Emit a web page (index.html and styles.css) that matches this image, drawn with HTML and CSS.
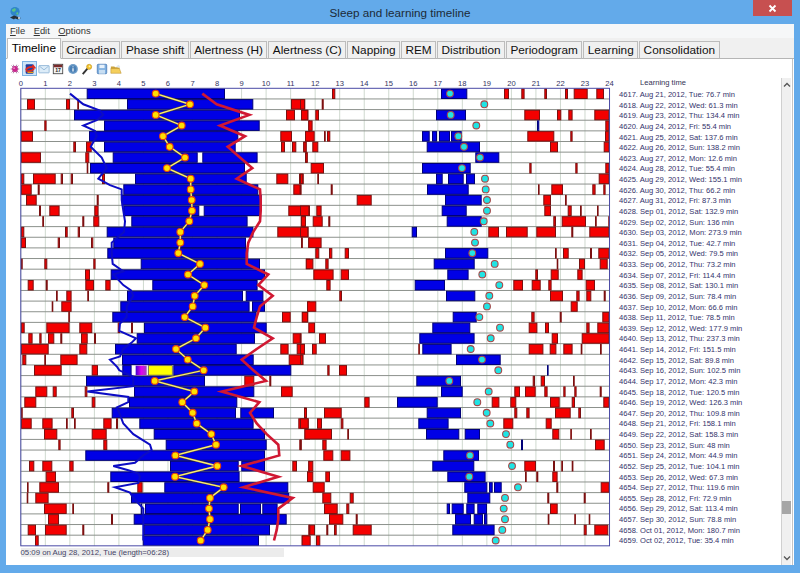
FILE: index.html
```html
<!DOCTYPE html>
<html lang="en">
<head>
<meta charset="utf-8">
<title>Sleep and learning timeline</title>
<link rel="stylesheet" href="styles.css">
</head>
<body>
<div class="window">
  <header class="titlebar">
    <svg class="app-icon" viewBox="0 0 14 14"><circle cx="7" cy="5.5" r="4.6" fill="#2f86c9"/><path d="M4 3.5l3-1.5 1 2-2 2-2-1zM8 7l2-1 .5 2-1.5 1z" fill="#58c08a"/><path d="M2 11.5l4-2 3 1 4 1.5-3 1.5-3-1-1 1z" fill="#27303a"/><circle cx="11" cy="12" r="1" fill="#e8e8e8"/></svg>
    <h1 class="title">Sleep and learning timeline</h1>
    <button class="close" aria-label="Close"><svg viewBox="0 0 9 9"><path d="M1.5 1.5l6 6M7.5 1.5l-6 6" stroke="#fff" stroke-width="1.8"/></svg></button>
  </header>
  <div class="client">
    <nav class="menu">
      <span><u>F</u>ile</span><span><u>E</u>dit</span><span><u>O</u>ptions</span>
    </nav>
    <div class="tabs">
      <div class="tab active">Timeline</div>
      <div class="tab">Circadian</div>
      <div class="tab">Phase shift</div>
      <div class="tab">Alertness (H)</div>
      <div class="tab">Alertness (C)</div>
      <div class="tab">Napping</div>
      <div class="tab">REM</div>
      <div class="tab">Distribution</div>
      <div class="tab">Periodogram</div>
      <div class="tab">Learning</div>
      <div class="tab">Consolidation</div>
    </div>
    <div class="panel">
      <div class="main">
        <div class="toolbar">
          <span class="tool"><svg viewBox="0 0 14 14"><g stroke="#8a3a7a" stroke-width=".8"><path d="M3 3l8 8M11 3L3 11M2 7h10M5 2l4 10M9 2L5 12"/></g><circle cx="7" cy="7" r="3.4" fill="#c8288e"/><circle cx="6" cy="6" r="1.1" fill="#ea8ac8"/></svg></span>
          <span class="tool on"><svg viewBox="0 0 14 14"><rect x="2" y="1.5" width="9" height="11" rx="1" fill="#1f3f9f"/><path d="M2 8c3-4 6-4 10-3l-2-2.500M12 6c-3 4-6 4-10 3" fill="none" stroke="#e02a20" stroke-width="2"/><path d="M4 11h7" stroke="#e8a020" stroke-width="1.500"/></svg></span>
          <span class="tool"><svg viewBox="0 0 14 14"><rect x="1" y="3" width="12" height="8.500" rx=".5" fill="#dcecf8" stroke="#8fb4d6"/><path d="M1.500 3.500L7 8l5.500-4.500" fill="none" stroke="#8fb4d6"/></svg></span>
          <span class="tool"><svg viewBox="0 0 14 14"><rect x="1.500" y="1.500" width="11" height="11" fill="#f4f4f4" stroke="#444"/><rect x="2" y="2" width="10" height="3" fill="#7a2a2a"/><text x="7" y="11" class="cal">17</text></svg></span>
          <span class="tool"><svg viewBox="0 0 14 14"><circle cx="7" cy="7" r="5.700" fill="#6e9cc8"/><circle cx="7" cy="7" r="4" fill="#4a80b6"/><path d="M7 4.200v.8M7 6v4" stroke="#fff" stroke-width="1.400"/></svg></span>
          <span class="tool"><svg viewBox="0 0 14 14"><path d="M2 13l5.500-6.500" stroke="#333" stroke-width="2.200"/><circle cx="9.500" cy="4.500" r="3" fill="#f4c430" stroke="#b88a10" stroke-width=".6"/><circle cx="10" cy="4" r="1" fill="#fff3b0"/></svg></span>
          <span class="tool"><svg viewBox="0 0 14 14"><rect x="1.500" y="1.500" width="11" height="11" rx="1" fill="#7fb0e0" stroke="#4f80b8"/><rect x="4" y="2" width="6" height="4" fill="#e8f2fb"/><rect x="3.500" y="8" width="7" height="4.500" fill="#c8def2"/></svg></span>
          <span class="tool"><svg viewBox="0 0 14 14"><path d="M1 4h4l1 1h5v2H1z" fill="#c9a23c"/><path d="M1 12V6.500h10L13 12z" fill="#f5cf5c" stroke="#b98d2c" stroke-width=".6"/><path d="M7 4l3-2 2 2-2 1.500z" fill="#dfe9f2"/></svg></span>
        </div>
        <div id="chart" class="chart"></div>
        <div class="status">05:09 on Aug 28, 2012, Tue (length=06:28)</div>
      </div>
      <ul class="list">
        <li class="list-head">Learning time</li>
        <li>4617. Aug 21, 2012, Tue: 76.7 min</li>
        <li>4618. Aug 22, 2012, Wed: 61.3 min</li>
        <li>4619. Aug 23, 2012, Thu: 134.4 min</li>
        <li>4620. Aug 24, 2012, Fri: 55.4 min</li>
        <li>4621. Aug 25, 2012, Sat: 137.6 min</li>
        <li>4622. Aug 26, 2012, Sun: 138.2 min</li>
        <li>4623. Aug 27, 2012, Mon: 12.6 min</li>
        <li>4624. Aug 28, 2012, Tue: 55.4 min</li>
        <li>4625. Aug 29, 2012, Wed: 155.1 min</li>
        <li>4626. Aug 30, 2012, Thu: 66.2 min</li>
        <li>4627. Aug 31, 2012, Fri: 87.3 min</li>
        <li>4628. Sep 01, 2012, Sat: 132.9 min</li>
        <li>4629. Sep 02, 2012, Sun: 136 min</li>
        <li>4630. Sep 03, 2012, Mon: 273.9 min</li>
        <li>4631. Sep 04, 2012, Tue: 42.7 min</li>
        <li>4632. Sep 05, 2012, Wed: 79.5 min</li>
        <li>4633. Sep 06, 2012, Thu: 73.2 min</li>
        <li>4634. Sep 07, 2012, Fri: 114.4 min</li>
        <li>4635. Sep 08, 2012, Sat: 130.1 min</li>
        <li>4636. Sep 09, 2012, Sun: 78.4 min</li>
        <li>4637. Sep 10, 2012, Mon: 66.6 min</li>
        <li>4638. Sep 11, 2012, Tue: 78.5 min</li>
        <li>4639. Sep 12, 2012, Wed: 177.9 min</li>
        <li>4640. Sep 13, 2012, Thu: 237.3 min</li>
        <li>4641. Sep 14, 2012, Fri: 151.5 min</li>
        <li>4642. Sep 15, 2012, Sat: 89.8 min</li>
        <li>4643. Sep 16, 2012, Sun: 102.5 min</li>
        <li>4644. Sep 17, 2012, Mon: 42.3 min</li>
        <li>4645. Sep 18, 2012, Tue: 120.5 min</li>
        <li>4646. Sep 19, 2012, Wed: 126.3 min</li>
        <li>4647. Sep 20, 2012, Thu: 109.8 min</li>
        <li>4648. Sep 21, 2012, Fri: 158.1 min</li>
        <li>4649. Sep 22, 2012, Sat: 158.3 min</li>
        <li>4650. Sep 23, 2012, Sun: 48 min</li>
        <li>4651. Sep 24, 2012, Mon: 44.9 min</li>
        <li>4652. Sep 25, 2012, Tue: 104.1 min</li>
        <li>4653. Sep 26, 2012, Wed: 67.3 min</li>
        <li>4654. Sep 27, 2012, Thu: 119.6 min</li>
        <li>4655. Sep 28, 2012, Fri: 72.9 min</li>
        <li>4656. Sep 29, 2012, Sat: 113.4 min</li>
        <li>4657. Sep 30, 2012, Sun: 78.8 min</li>
        <li>4658. Oct 01, 2012, Mon: 180.7 min</li>
        <li>4659. Oct 02, 2012, Tue: 35.4 min</li>
      </ul>
      <div class="scrollbar">
        <svg class="arrow" viewBox="0 0 8 6"><path d="M1 4.500L4 1.500l3 3" fill="none" stroke="#555" stroke-width="1.300"/></svg>
        <div class="thumb"></div>
        <svg class="arrow" viewBox="0 0 8 6"><path d="M1 1.500L4 4.500l3-3" fill="none" stroke="#555" stroke-width="1.300"/></svg>
      </div>
    </div>
  </div>
</div>
<script src="app.js"></script>
</body>
</html>
```
FILE: styles.css
```css
* { box-sizing: border-box; }
html, body { margin: 0; height: 100%; }
body { font-family: "Liberation Sans", Arial, sans-serif; overflow: hidden; }
.window {
  width: 800px; height: 573px;
  background: #63aaea;
  display: flex; flex-direction: column;
  padding: 0 6px 8px;
}
.titlebar { height: 24px; display: flex; align-items: flex-start; position: relative; flex: none; }
.app-icon { width: 14px; height: 14px; margin: 6px 0 0 2px; }
.title {
  position: absolute; left: -6px; width: 800px; top: 6px; margin: 0;
  text-align: center; font-weight: normal; font-size: 11.7px; line-height: 13px; color: #1c2a38;
}
.close {
  position: absolute; right: 2px; top: 0; width: 39px; height: 16px;
  border: 0; padding: 0; background: #c75050;
  display: flex; align-items: center; justify-content: center;
}
.close svg { width: 9px; height: 9px; }
.client { flex: 1; background: #fff; display: flex; flex-direction: column; min-height: 0; }
.menu {
  height: 14px; background: #f6f7f8; flex: none;
  display: flex; gap: 8.5px; padding-left: 4px;
  font-size: 9.4px; line-height: 14px; color: #333;
}
.tabs {
  height: 21px; background: #f0f0f0; flex: none;
  display: flex; align-items: flex-end; gap: 1px;
  padding-left: 1px; border-bottom: 1px solid #b5b5b5;
}
.tab {
  height: 18px; padding: 0 3.45px; margin-bottom: -1px;
  border: 1px solid #bcbcbc; border-bottom: 1px solid #b5b5b5;
  background: #f0f0f0;
  font-size: 11.8px; line-height: 16px; color: #111;
}
.tab.active {
  height: 21px; background: #fff; border-bottom-color: #fff;
  line-height: 18px; padding: 0 3.8px; color: #000;
}
.panel { flex: 1; display: flex; min-height: 0; border-right: 1px solid #c4c4c4; margin-right: 1px; }
.main { width: 610px; flex: none; display: flex; flex-direction: column; }
.toolbar { height: 19px; flex: none; display: flex; align-items: flex-start; padding: 2px 0 0 2px; }
.tool {
  width: 14.4px; height: 15px; display: flex; align-items: center; justify-content: center;
}
.tool svg { width: 12px; height: 12px; display: block; }
.tool.on { background: #cfe5f8; outline: 1px solid #7fb4e2; outline-offset: -1px; }
.cal { font: bold 6px "Liberation Sans", sans-serif; text-anchor: middle; fill: #222; }
.chart { height: 470px; flex: none; }
.chart svg { display: block; }
.axis { font: 7.6px "Liberation Sans", sans-serif; text-anchor: middle; fill: #33335f; }
.status {
  margin-left: 14.5px; width: 263px; height: 9px;
  background: #ececec; color: #444466;
  font-size: 7.8px; line-height: 9px; white-space: nowrap;
}
.list {
  list-style: none; margin: 19px 0 0; padding: 0 0 0 3px; width: 165px; flex: none;
  font-size: 7.58px; color: #33336b;
}
.list li { height: 10.64px; line-height: 10.64px; white-space: nowrap; }
.list .list-head { height: 12px; line-height: 10px; padding-left: 21px; color: #333355; }
.scrollbar {
  width: 10px; margin-top: 19px; flex: none; background: #f0f0f0;
  border-left: 1px solid #d0d0d0;
  display: flex; flex-direction: column; align-items: center;
  padding-top: 4px; padding-bottom: 4px;
}
.arrow { width: 8px; height: 6px; flex: none; }
.thumb { width: 9px; height: 13px; background: #a6a6a6; margin: auto 0 41px; }
```
FILE: app.js
```js
var NS = 'http://www.w3.org/2000/svg';
var TOP = 88.3, RH = 10.64, X0 = 20.8, HW = 24.53;
/* each row: left-side red, left-side blue, right-side red, right-side blue (3x zoom units), dot positions */
var rows = [
 ['', '260-675', '96-106 612-627 664-674 733-741 795-804 821-863 889-912', '423-502', 450, 467],
 ['81-105 198-210 232-237 873-916', '381-760', '0-15 65-71', '', 553, 570],
 ['858-885 904-925', '222-720', '3-25 46-57 673-720 771-784 805-818 883-928', '408-498', 452, 467],
 ['133-140 925-930', '312-779', '25-38 916-928', '711-718', 529, 545],
 ['63-99 841-876 916-930', '267-715', '15-44 72-77 81-91 682-763 811-818 915-928', '366-389 396-411 417-450 453-485', 475, 489],
 ['220-228 258-275 843-855 876-889 910-920', '312-707', '10-20 37-55 750-774 911-928', '380-540', 492, 509],
 ['63-123 256-268 916-923', '338-593 607-773', '15-23', '526-598', 540, 555],
 ['260-264', '270-735', '32-72 688-695 826-833 916-928', '366-512', 486, 501],
 ['63-73 99-167 182-189 212-219 306-315 829-865 897-911', '405-740', '0-10 52-57 896-928', '408-428 444-491 498-525', 555, 572],
 ['63-95 113-119 880-902', '370-775', '0-3 92-98 714-718 754-789 877-887 910-917', '381-506', 557, 572],
 ['78-110 290-296', '365-785', '170-215 730-753 795-800', '435-545', 561, 575],
 ['117-123 148-179 283-296 865-930', '370-598 611-782', '0-28 49-65 733-753 803-815 840-845 891-895', '425-500', 561, 576],
 ['127-132 247-253 280-298 902-918', '394-743', '3-18 38-68 85-91 760-768 785-858 885-890 925-928', '440-545', 551, 568],
 ['63-73 195-203 233-240 832-926', '320-760', '0-25 565-597 618-683 709-768 814-820 868-928', '335-351', 523, 541],
 ['63-78 173-180 273-280 903-908 925-930', '340-738', '3-7 25-65', '', 525, 541],
 ['', '322-745', '46-58 87-97 134-147 765-770 789-806 870-876 895-928', '435-565', 517, 535],
 ['63-68 133-142 280-287 918-930', '422-780', '17-40 76-86 770-774 837-855 899-923', '401-524', 584, 600],
 ['255-270', '332-795', '40-101 122-147 706-714 752-776 832-848', '442-506', 547, 564],
 ['83-101 137-143 256-282 316-332', '457-773', '79-92 640-669 695-722 745-755 857-885', '344-435', 598, 613],
 ['168-173 199-215 262-267', '381-729 737-790', '118-126 750-789 829-839 859-874 911-917', '438-526', 568, 584],
 ['155-159 184-215 922-930', '361-749 756-795', '21-49 812-833', '', 561, 578],
 ['205-209 846-872 906-925', '337-770', '5-24 694-704 779-785 907-928', '458-530', 538, 554],
 ['63-74 139-209 238-277 353-360 393-399', '432-800', '25-45 686-712 735-747 859-869 892-928', '397-511', 600, 616],
 ['85-98 118-125 144-163 181-187 243-263 282-288 878-902', '410-765', '0-3 57-78 755-774 845-928', '358-524', 572, 588],
 ['63-146 238-262 841-866 890-915', '345-710', '0-15 36-50 355-359 686-730 749-769 790-818 842-847 900-905', '367-455', 512, 528],
 ['67-79 133-138 181-233 866-910', '366-761', '0-10', '468-602', 546, 563],
 ['102-185 275-294', '367-395 520-874', '82-89 117-141', '741-744', 595, 611],
 ['733-763 808-814', '258-615', '698-705 722-735 819-824', '349-483', 448, 464],
 ['106-142 158-170 254-262 843-878', '402-763', '643-660 675-707 733-743 790-797 823-830 899-905', '423-488', 566, 583],
 ['73-109 275-286', '387-712', '193-209 575-598 631-649 750-779 815-825 910-928', '291-413', 532, 547],
 ['63-68 214-222 912-920', '335-708 721-822', '12-21 72-125 643-652 679-689 765-812 835-843', '380-483', 560, 578],
 ['63-95 127-158 198-203 222-227 310-335 348-354 895-926', '418-761', '0-26 51-66 122-130 610-640 737-755', '355-446', 571, 590],
 ['132-172 275-320 914-930', '461-795', '13-96 142-147 757-778 811-815 870-875', '378-478 494-540', 618, 634],
 ['175-182 310-322 898-905', '497-800', '0-4 67-80 885-914', '663-669', 631, 648],
 ['', '256-795', '70-100 122-151', '430-537', 510, 526],
 ['87-103 127-157 208-221 877-891 925-930', '510-716 724-795', '25-40 673-708 759-765 784-789 815-820', '397-523', 636, 652],
 ['137-168 921-930', '331-719', '21-40 76-90 675-680 709-715 757-773', '442-557', 508, 525],
 ['81-85 118-177 322-328 412-428', '493-865', '38-74 769-775 902-928', '493-562 567-578 582-605', 654, 671],
 ['80-84 106-146', '393-868', '67-94 149-161 742-748 851-857', '502-571', 615, 630],
 ['132-200 217-222', '422-426 435-716 720-783 787-833', '72-113 139-148 750-773', '440-450 455-491 499-524 532-561', 611, 627],
 ['144-177 333-339', '401-860', '87-130 167-173 743-748 823-827 866-870', '465-513 521-549 552-562', 615, 630],
 ['83-108 135-200 247-253 925-930', '431-810', '28-45 79-85 102-110 158-215 851-860 883-925', '457-584', 607, 623],
 ['105-116 905-930', '428-777', '5-32 48-61', '', 587, 602]
];
var blueLine = [[0,210],[1,250],[1.6,300],[2,310],[2.5,290],[3,250],[3.5,285],[4,290],[5,272],[6,305],[7,320],[8,295],[8.6,330],[9,365],[10,365],[11,370],[12,375],[13,372],[14,335],[15,335],[16,338],[16.7,370],[17,340],[18,370],[18.5,393],[19,400],[20,380],[21,380],[21.6,360],[22.3,358],[23,408],[23.4,395],[24,370],[24.7,360],[25,330],[25.7,352],[26,358],[26.6,400],[27.5,400],[28,262],[28.5,385],[29,385],[29.5,350],[30,358],[31,370],[32,400],[33,450],[33.5,455],[34,430],[34.7,405],[35,340],[35.4,385],[35.7,415],[36,420],[36.6,415],[37,345],[37.5,390],[38,400],[39,430],[40,430],[41,430],[42,430]];
var redLine = [[0,607],[1,650],[2,748],[3,660],[4,735],[5,683],[6,720],[7,757],[8,710],[9,780],[10,782],[11,782],[12,780],[13,760],[14,745],[15,740],[16,740],[17,805],[18,775],[19,818],[20,780],[21,770],[22,762],[23,818],[24,770],[25,725],[26,760],[27,798],[28,665],[29,778],[30,750],[31,770],[32,800],[33,835],[34,838],[35,725],[36,835],[37,730],[38,878],[39,835],[40,835],[41,830],[42,822]];

function cy(r) { return TOP + (r + 0.5) * RH; }
function lx(v) { return v / 3; }
function rx(v) { return 300 + v / 3; }
function pts(list, f) { return list.map(function (p) { return f(p[1]).toFixed(1) + ',' + cy(p[0]).toFixed(1); }).join(' '); }
function bars(str, f, r, cls) {
  if (!str) return '';
  return str.split(' ').map(function (s) {
    var a = s.split('-'), x1 = f(+a[0]), x2 = f(+a[1]);
    return '<rect class="' + cls + '" x="' + (x1 + 0.5).toFixed(1) + '" y="' + (TOP + r * RH + 0.7).toFixed(1) + '" width="' + Math.max(x2 - x1 - 1, 0.6).toFixed(1) + '" height="' + (RH - 1.1).toFixed(1) + '"/>';
  }).join('');
}
var s = '<defs><linearGradient id="pg"><stop offset="0" stop-color="#4000d0"/><stop offset=".5" stop-color="#e000f0"/><stop offset="1" stop-color="#a040c0"/></linearGradient></defs>';
var i;
for (i = 0; i <= 24; i++) {
  var x = X0 + i * HW;
  s += '<line x1="' + x + '" x2="' + x + '" y1="' + TOP + '" y2="' + (TOP + 43 * RH) + '" stroke="#cfd9cf"/>';
  s += '<text class="axis" x="' + x + '" y="86">' + i + '</text>';
}
for (i = 1; i < 43; i++) {
  var y = TOP + i * RH;
  s += '<line x1="' + X0 + '" x2="' + (X0 + 24 * HW) + '" y1="' + y + '" y2="' + y + '" stroke="#8c918c"/>';
}
var style = '<style>.r{fill:#f40000;stroke:#7a1010;stroke-width:1}.b{fill:#0000e6;stroke:#000078;stroke-width:1}</style>';
rows.forEach(function (row, r) {
  s += bars(row[0], lx, r, 'r') + bars(row[1], lx, r, 'b') + bars(row[2], rx, r, 'r') + bars(row[3], rx, r, 'b');
});
var y26 = TOP + 26 * RH + 0.7;
s += '<rect x="' + lx(407) + '" y="' + y26 + '" width="' + (33 / 3) + '" height="' + (RH - 1.1) + '" fill="url(#pg)"/>';
s += '<rect x="' + lx(445) + '" y="' + y26 + '" width="' + (72 / 3) + '" height="' + (RH - 1.1) + '" fill="#ffff00" stroke="#555" stroke-width=".8"/>';
s += '<rect x="' + X0 + '" y="' + TOP + '" width="' + (24 * HW) + '" height="' + (43 * RH) + '" fill="none" stroke="#4a4aa6"/>';
s += '<polyline points="' + pts(blueLine, lx) + '" fill="none" stroke="#0c0cc4" stroke-width="2"/>';
s += '<polyline points="' + pts(redLine, lx) + '" fill="none" stroke="#d01832" stroke-width="2.6"/>';
var yellow = rows.map(function (row, r) { return [r, row[5]]; });
s += '<polyline points="' + pts(yellow, lx) + '" fill="none" stroke="#6a5a20" stroke-width="2.200"/>';
s += '<polyline points="' + pts(yellow, lx) + '" fill="none" stroke="#f8ec80" stroke-width="1.300"/>';
rows.forEach(function (row, r) {
  s += '<circle cx="' + lx(row[5]).toFixed(1) + '" cy="' + cy(r).toFixed(1) + '" r="3.400" fill="#ffe000" stroke="#e04010" stroke-width="1.100"/>';
  s += '<circle cx="' + rx(row[4]).toFixed(1) + '" cy="' + cy(r).toFixed(1) + '" r="3.400" fill="#20e4e4" stroke="#a84848" stroke-width="1.100"/>';
});
document.getElementById('chart').innerHTML =
  '<svg xmlns="' + NS + '" width="610" height="470" viewBox="6 78 610 470">' + style + s + '</svg>';
```
